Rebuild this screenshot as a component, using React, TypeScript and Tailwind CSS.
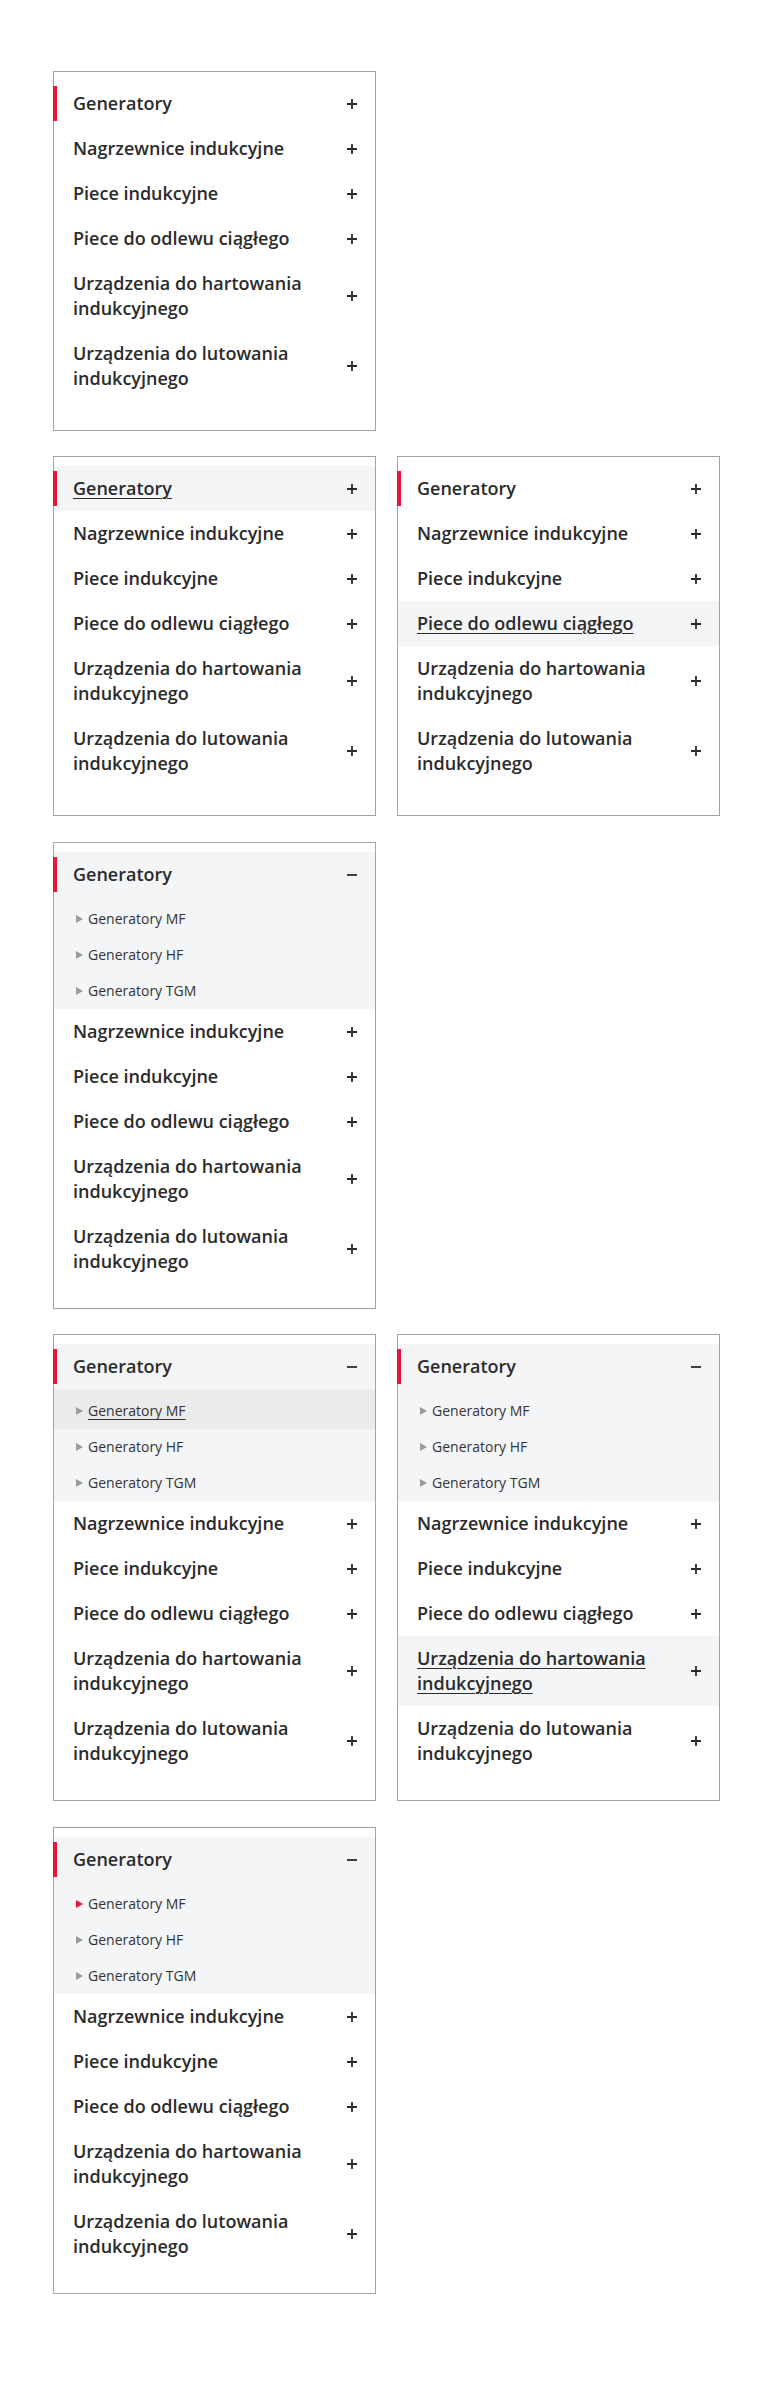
import React from "react";

const ITEMS = [
  "Generatory",
  "Nagrzewnice indukcyjne",
  "Piece indukcyjne",
  "Piece do odlewu ciągłego",
  "Urządzenia do hartowania indukcyjnego",
  "Urządzenia do lutowania indukcyjnego",
];

const SUBS = ["Generatory MF", "Generatory HF", "Generatory TGM"];

function PlusIcon() {
  return (
    <svg width="10" height="10" viewBox="0 0 10 10" className="shrink-0">
      <path d="M0 5H10M5 0V10" stroke="#2b2b2b" strokeWidth="1.8" />
    </svg>
  );
}

function MinusIcon() {
  return (
    <svg width="10" height="10" viewBox="0 0 10 10" className="shrink-0">
      <path d="M0 5H10" stroke="#2b2b2b" strokeWidth="1.8" />
    </svg>
  );
}

type MenuProps = {
  expanded?: boolean;
  hoverRow?: number;
  subHover?: number;
  subActive?: number;
  className?: string;
};

function Menu({ expanded = false, hoverRow, subHover, subActive, className = "" }: MenuProps) {
  return (
    <div
      className={`w-[323px] border border-[#a3a3a3] bg-white pt-[9px] ${expanded ? "pb-[24px]" : "pb-[29px]"} ${className}`}
    >
      {ITEMS.map((label, i) => {
        const isFirst = i === 0;
        const open = isFirst && expanded;
        const hovered = hoverRow === i;
        return (
          <div key={label} className={open ? "bg-[#f4f5f7]" : ""}>
            <div
              className={`relative flex items-center justify-between pl-[19px] pr-[18px] py-[10px] ${hovered ? "bg-[#f4f5f7]" : ""}`}
            >
              {isFirst && (
                <span className="absolute left-[-1px] top-[5px] h-[35px] w-[4px] bg-[#e8173a]" />
              )}
              <span
                className={`text-[18px] font-semibold leading-[25px] text-[#2b2b2b] max-w-[250px] ${hovered ? "underline decoration-1 underline-offset-[3px]" : ""}`}
              >
                {label}
              </span>
              {open ? <MinusIcon /> : <PlusIcon />}
            </div>
            {open && (
              <div className="pb-0">
                {SUBS.map((s, j) => (
                  <div
                    key={s}
                    className={`flex items-center pl-[22px] ${j === 0 ? "h-[40px] pt-[4px]" : "h-[36px]"} ${subHover === j ? "bg-[#ebebeb]" : ""}`}
                  >
                    <span
                      className={`mr-[5px] h-0 w-0 border-y-[4px] border-l-[7px] border-y-transparent ${subActive === j ? "border-l-[#e8173a]" : "border-l-[#9c9c9c]"}`}
                    />
                    <span
                      className={`text-[14px] leading-[20px] text-[#333333] ${subHover === j ? "underline decoration-1 underline-offset-[3px]" : ""}`}
                    >
                      {s}
                    </span>
                  </div>
                ))}
              </div>
            )}
          </div>
        );
      })}
    </div>
  );
}

export default function App() {
  return (
    <div
      className="min-h-[2403px] w-[777px] bg-white pl-[53px] pt-[71px]"
      style={{ fontFamily: '"Open Sans", "Noto Sans", sans-serif' }}
    >
      <Menu />
      <div className="mt-[25px] flex gap-[21px]">
        <Menu hoverRow={0} />
        <Menu hoverRow={3} />
      </div>
      <div className="mt-[26px]">
        <Menu expanded />
      </div>
      <div className="mt-[25px] flex items-start gap-[21px]">
        <Menu expanded subHover={0} />
        <Menu expanded hoverRow={4} />
      </div>
      <div className="mt-[26px]">
        <Menu expanded subActive={0} />
      </div>
    </div>
  );
}
